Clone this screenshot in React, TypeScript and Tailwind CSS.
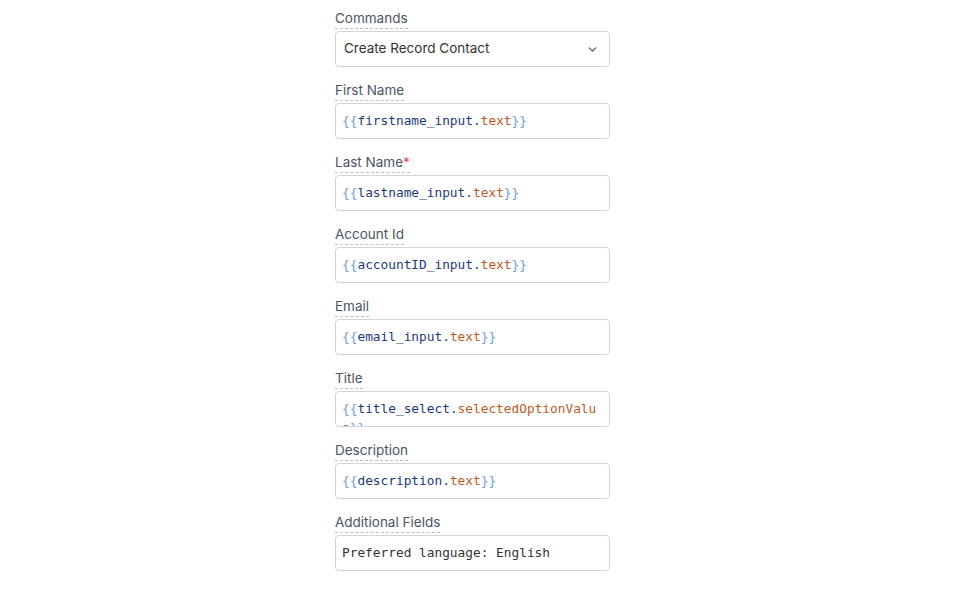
import { ChevronDown } from "lucide-react";

type Field = {
  label: string;
  required?: boolean;
  name?: string;
  prop?: string;
  plain?: string;
};

const fields: Field[] = [
  { label: "First Name", name: "firstname_input", prop: "text" },
  { label: "Last Name", required: true, name: "lastname_input", prop: "text" },
  { label: "Account Id", name: "accountID_input", prop: "text" },
  { label: "Email", name: "email_input", prop: "text" },
  { label: "Title", name: "title_select", prop: "selectedOptionValue" },
  { label: "Description", name: "description", prop: "text" },
  { label: "Additional Fields", plain: "Preferred language: English" },
];

function Label({ text, required }: { text: string; required?: boolean }) {
  return (
    <div className="h-[24px] flex items-start pt-[3px]">
      <span className="text-[13.5px] leading-[16px] text-[#4b5563] border-b border-dashed border-[#b8bec6] pb-[2px]">
        {text}
        {required && <span className="text-[#e5484d]">*</span>}
      </span>
    </div>
  );
}

function CodeBox({ f }: { f: Field }) {
  return (
    <div className="h-[36px] border border-[#d1d5db] rounded-[4px] bg-white overflow-hidden px-[6px] pt-[7px]">
      <div
        className="text-[12.8px] leading-[19px] break-all"
        style={{ fontFamily: '"DejaVu Sans Mono", monospace' }}
      >
        {f.plain ? (
          <span className="text-[#333]">{f.plain}</span>
        ) : (
          <>
            <span className="text-[#6d9be3]">{"{{"}</span>
            <span className="text-[#1c3a7e]">{f.name}.</span>
            <span className="text-[#c05a1f]">{f.prop}</span>
            <span className="text-[#6d9be3]">{"}}"}</span>
          </>
        )}
      </div>
    </div>
  );
}

export default function App() {
  return (
    <div
      className="w-[958px] h-[590px] bg-white pl-[335px] pt-[7px]"
      style={{ fontFamily: "Inter, sans-serif" }}
    >
      <div className="w-[275px] flex flex-col">
        <Label text="Commands" />
        <div className="h-[36px] border border-[#d1d5db] rounded-[4px] flex items-center justify-between pl-[8px] pr-[10px]">
          <span className="text-[13.5px] text-[#333] -mt-[1px]">Create Record Contact</span>
          <ChevronDown size={13} strokeWidth={2.2} className="text-[#4b5563]" />
        </div>
        {fields.map((f) => (
          <div key={f.label} className="mt-[12px] flex flex-col">
            <Label text={f.label} required={f.required} />
            <CodeBox f={f} />
          </div>
        ))}
      </div>
    </div>
  );
}
